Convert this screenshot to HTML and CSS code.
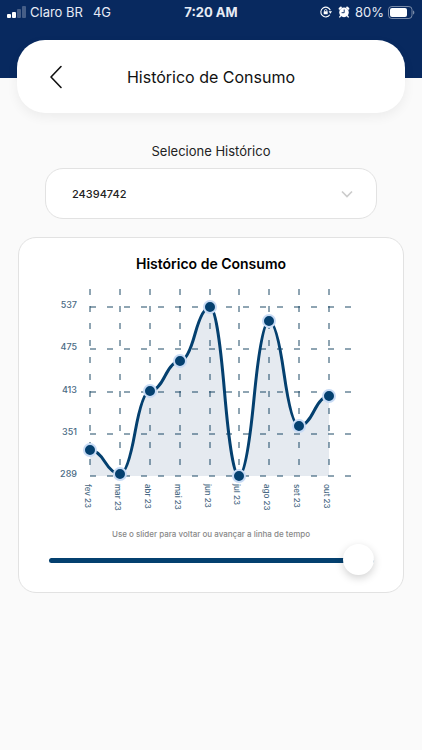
FILE: index.html
```html
<!DOCTYPE html>
<html lang="pt-br">
<head>
    <meta charset="UTF-8">
    <meta name="viewport" content="width=device-width, initial-scale=1.0">
    <title>Histórico de Consumo</title>
    <link rel="stylesheet" href="styles.css">
</head>
<body>
    <!-- Topo azul: barra de status e cartão de navegação -->
    <header class="topo">
        <div class="status">
            <div class="status-esquerda">
                <svg class="sinal" width="19" height="12" viewBox="0 0 19 12" aria-hidden="true">
                    <rect x="0" y="8" width="4" height="4" rx="1" fill="#fff"/>
                    <rect x="5" y="6" width="4" height="6" rx="1" fill="#fff"/>
                    <rect x="10" y="3" width="4" height="9" rx="1" fill="#fff" opacity=".25"/>
                    <rect x="15" y="0" width="4" height="12" rx="1" fill="#fff" opacity=".25"/>
                </svg>
                <span>Claro BR</span>
                <span class="rede">4G</span>
            </div>
            <strong class="hora">7:20 AM</strong>
            <div class="status-direita">
                <!-- Bloqueio de rotação -->
                <svg width="12" height="12" viewBox="0 0 12 12" aria-hidden="true">
                    <path d="M10.300 4.200A4.900 4.900 0 1 0 9.800 8.800" fill="none" stroke="#fff" stroke-width="1.100"/>
                    <path d="M8.600 5.200H12L10.300 7.800z" fill="#fff"/>
                    <rect x="3.700" y="5.300" width="4" height="3" rx=".5" fill="#fff"/>
                    <path d="M4.500 5.500V4.700a1.200 1.200 0 0 1 2.400 0v.8" fill="none" stroke="#fff" stroke-width=".9"/>
                </svg>
                <!-- Alarme -->
                <svg class="alarme" width="12" height="12" viewBox="0 0 12 12" aria-hidden="true">
                    <path d="M1.600 2.700 2.900 1.500M10.400 2.700 9.100 1.500" stroke="#fff" stroke-width="2" stroke-linecap="round"/>
                    <path d="M2.600 9.800 1.800 10.900M9.400 9.800 10.200 10.900" stroke="#fff" stroke-width="1.400" stroke-linecap="round"/>
                    <circle cx="6" cy="6.400" r="4.800" fill="#fff"/>
                    <path d="M6.200 3.500v3.200H3.600" fill="none" stroke="#08295f" stroke-width=".9"/>
                </svg>
                <span>80%</span>
                <!-- Bateria -->
                <svg class="bateria" width="27" height="13" viewBox="0 0 27 13" aria-hidden="true">
                    <rect x=".5" y=".5" width="23.500" height="12" rx="3.200" fill="none" stroke="#fff" opacity=".45"/>
                    <rect x="2" y="2" width="17" height="9" rx="2" fill="#fff"/>
                    <path d="M25 4.500v4c1.800-.5 1.800-3.500 0-4z" fill="#fff" opacity=".45"/>
                </svg>
            </div>
        </div>
        <nav class="navegacao">
            <button type="button" class="voltar" aria-label="Voltar">
                <svg width="14" height="24" viewBox="0 0 14 24" aria-hidden="true">
                    <path d="M12 1.500 2 12l10 10.500" fill="none" stroke="#111" stroke-width="1.600" stroke-linecap="round" stroke-linejoin="round"/>
                </svg>
            </button>
            <h1>Histórico de Consumo</h1>
        </nav>
    </header>

    <main>
        <!-- Seleção da unidade consumidora -->
        <form class="selecao">
            <label for="historico">Selecione Histórico</label>
            <div class="campo">
                <select id="historico">
                    <option>24394742</option>
                </select>
                <svg class="seta" width="12" height="8" viewBox="0 0 12 8" aria-hidden="true">
                    <path d="M1 1.500 6 6.500 11 1.500" fill="none" stroke="#ccc" stroke-width="1.700"/>
                </svg>
            </div>
        </form>

        <!-- Gráfico de consumo -->
        <section class="cartao">
            <h2>Histórico de Consumo</h2>
            <svg id="grafico" class="grafico" viewBox="0 0 384 236" role="img" aria-label="Consumo por mês"></svg>
            <label class="dica" for="tempo">Use o slider para voltar ou avançar a linha de tempo</label>
            <input type="range" id="tempo" class="slider" min="0" max="8" value="8">
        </section>
    </main>

    <script src="script.js"></script>
</body>
</html>
```
FILE: styles.css
```css
* {
    box-sizing: border-box;
}

body {
    margin: 0;
    min-height: 100vh;
    font-family: 'Inter', sans-serif;
    background-color: #fafafa;
    color: #111;
}

/* Topo: o azul termina no meio do cartão de navegação */
.topo {
    padding: 0 17px;
    background: linear-gradient(#08295f 78px, transparent 78px);
}

.status {
    display: grid;
    grid-template-columns: 1fr auto 1fr;
    align-items: center;
    height: 24px;
    margin: 0 -10px 16px;
    font-size: 13px;
    color: #e6ebf5;
}

.status-esquerda,
.status-direita {
    display: flex;
    align-items: center;
}

.status-direita {
    justify-content: flex-end;
}

.sinal {
    margin-right: 4px;
}

.rede {
    margin-left: 10px;
}

.hora {
    font-weight: 700;
}

.alarme {
    margin: 0 5px 0 6px;
}

.bateria {
    margin-left: 4px;
}

/* Cartão de navegação */
.navegacao {
    display: grid;
    grid-template-columns: 48px 1fr 48px;
    align-items: center;
    height: 73px;
    padding: 0 16px;
    border-radius: 28px;
    background-color: #fff;
    box-shadow: 0 4px 12px rgba(0, 0, 0, 0.06);
}

.voltar {
    display: flex;
    padding: 8px 16px;
    border: none;
    background: none;
    cursor: pointer;
}

h1 {
    margin: 0;
    font-size: 16px;
    font-weight: 400;
    text-align: center;
}

/* Seleção do histórico */
.selecao {
    padding: 28px 45px 0;
    text-align: center;
}

.selecao label {
    display: block;
    font-size: 13px;
    line-height: 20px;
    color: #222;
}

.campo {
    position: relative;
    margin-top: 7px;
}

.campo select {
    display: block;
    width: 100%;
    height: 51px;
    padding: 0 26px;
    border: 1px solid #e2e2e2;
    border-radius: 18px;
    appearance: none;
    background-color: #fff;
    font-family: inherit;
    font-size: 11px;
    font-weight: 500;
    color: #222;
}

.seta {
    position: absolute;
    top: 22px;
    right: 24px;
    pointer-events: none;
}

/* Cartão do gráfico */
.cartao {
    display: flex;
    flex-direction: column;
    margin: 18px 18px 0;
    padding: 17px 0 16px;
    border: 1px solid #e2e2e2;
    border-radius: 18px;
    background-color: #fff;
}

h2 {
    margin: 0;
    font-size: 14px;
    line-height: 18px;
    font-weight: 600;
    text-align: center;
    color: #000;
}

.grafico {
    display: block;
    width: 100%;
    margin-top: 7px;
}

.grade {
    stroke: #1f4a66;
    stroke-width: 1;
    stroke-dasharray: 6 11;
}

.area {
    fill: #00306f;
    fill-opacity: 0.1;
}

.linha {
    fill: none;
    stroke: #04406f;
    stroke-width: 3;
}

.ponto {
    fill: #04406f;
    stroke: #c8dbf5;
    stroke-width: 2;
}

.valor {
    font-size: 9px;
    font-weight: 500;
    text-anchor: end;
    fill: #4a6a84;
}

.mes {
    font-size: 8px;
    font-weight: 500;
    fill: #4a6a84;
}

.dica {
    margin-top: 12px;
    font-size: 8px;
    font-weight: 500;
    line-height: 12px;
    text-align: center;
    color: #888;
}

/* Controle deslizante da linha de tempo */
.slider {
    height: 32px;
    margin: 4px 29px 0 30px;
    appearance: none;
    background: none;
}

.slider::-webkit-slider-runnable-track {
    height: 5px;
    border-radius: 3px;
    background-color: #04406f;
}

.slider::-webkit-slider-thumb {
    width: 31px;
    height: 31px;
    margin-top: -14px;
    border-radius: 50%;
    appearance: none;
    background-color: #fff;
    box-shadow: 0 3px 8px rgba(0, 0, 0, 0.18);
}
```
FILE: script.js
```js
// Consumo de cada mês
var consumo = [
    { mes: 'fev 23', valor: 327 },
    { mes: 'mar 23', valor: 292 },
    { mes: 'abr 23', valor: 414 },
    { mes: 'mai 23', valor: 458 },
    { mes: 'jun 23', valor: 537 },
    { mes: 'jul 23', valor: 289 },
    { mes: 'ago 23', valor: 516 },
    { mes: 'set 23', valor: 362 },
    { mes: 'out 23', valor: 406 }
];
var escala = [537, 475, 413, 351, 289];

// Limites da área do gráfico
var esquerda = 71, direita = 310, topo = 27, base = 196;

function posX(i) {
    return Math.round(esquerda + i * (direita - esquerda) / (consumo.length - 1));
}

function posY(valor) {
    return Math.round(base - (valor - 289) / (537 - 289) * (base - topo));
}

// Curva suave que passa por todos os pontos
function curva() {
    var d = 'M' + posX(0) + ',' + posY(consumo[0].valor);
    for (var i = 0; i < consumo.length - 1; i++) {
        var x1 = posX(i), y1 = posY(consumo[i].valor);
        var x2 = posX(i + 1), y2 = posY(consumo[i + 1].valor);
        var xm = (x1 + x2) / 2, ym = (y1 + y2) / 2;
        d += ' Q' + (x1 + xm) / 2 + ',' + y1 + ' ' + xm + ',' + ym;
        d += ' Q' + (x2 + xm) / 2 + ',' + y2 + ' ' + x2 + ',' + y2;
    }
    return d;
}

function desenharGrafico() {
    var svg = '';

    // Linhas horizontais e valores
    escala.forEach(function (valor) {
        var y = posY(valor);
        svg += '<line class="grade" x1="' + esquerda + '" x2="332" y1="' + y + '" y2="' + y + '"/>';
        svg += '<text class="valor" x="58" y="' + (y + 1) + '">' + valor + '</text>';
    });

    // Linhas verticais e meses
    consumo.forEach(function (item, i) {
        var x = posX(i);
        svg += '<line class="grade" x1="' + x + '" x2="' + x + '" y1="9" y2="' + base + '"/>';
        svg += '<text class="mes" transform="translate(' + (x - 5) + ' 204) rotate(90)">' + item.mes + '</text>';
    });

    svg += '<path class="area" d="' + curva() + ' V' + base + ' H' + esquerda + ' Z"/>';
    svg += '<path class="linha" d="' + curva() + '"/>';

    consumo.forEach(function (item, i) {
        svg += '<circle class="ponto" cx="' + posX(i) + '" cy="' + posY(item.valor) + '" r="6"/>';
    });

    document.getElementById('grafico').innerHTML = svg;
}

desenharGrafico();
```
